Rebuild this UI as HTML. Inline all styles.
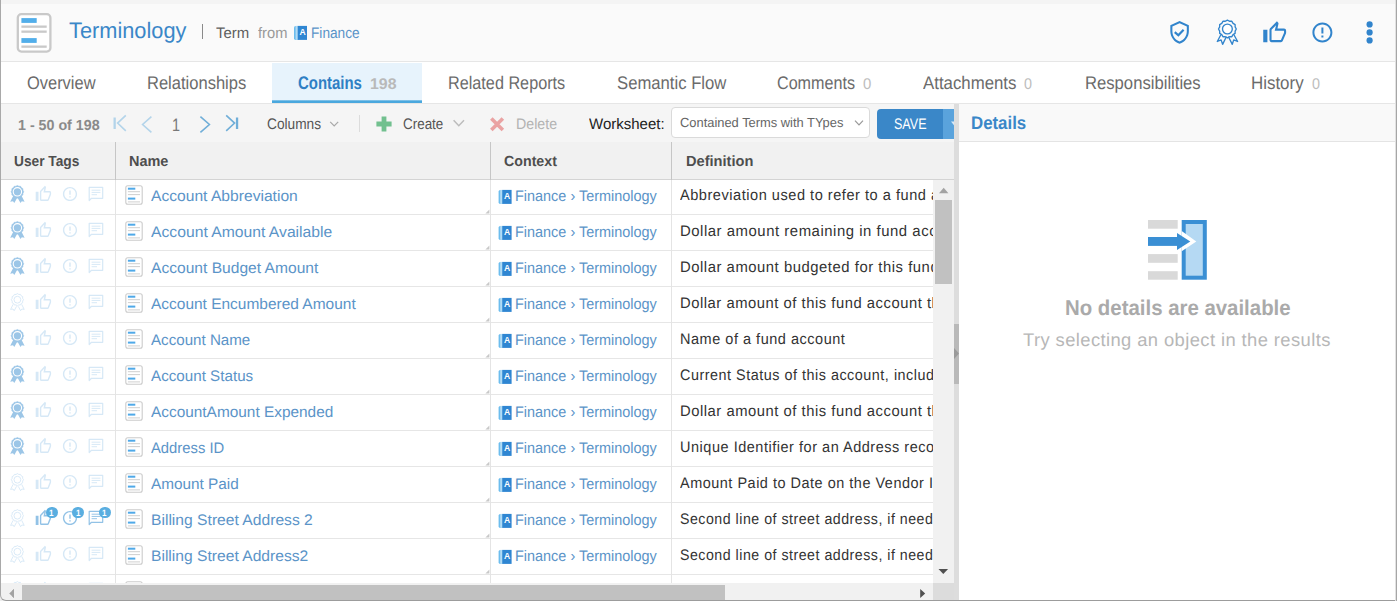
<!DOCTYPE html>
<html lang="en"><head><meta charset="utf-8"><title>Terminology</title>
<style>
html,body{margin:0;padding:0}
body{width:1397px;height:601px;overflow:hidden;position:relative;background:#fff;font-family:"Liberation Sans", sans-serif}
.b{position:absolute}
.i{position:absolute;display:block;overflow:visible}
.t{position:absolute;white-space:nowrap;line-height:1;transform-origin:0 0;display:block;text-rendering:geometricPrecision}
</style></head>
<body>
<div class="b" style="left:0;top:0;width:1397px;height:4px;background:#f4f4f4"></div>
<div class="b" style="left:0;top:4px;width:1397px;height:57px;background:#fafafa"></div>
<div class="b" style="left:0;top:61px;width:1397px;height:1px;background:#e6e6e6"></div>
<div class="b" style="left:0;top:62px;width:1397px;height:41px;background:#fff"></div>
<div class="b" style="left:272px;top:63px;width:150px;height:38px;background:#e7f3fc"></div>
<div class="b" style="left:0;top:103px;width:1397px;height:1px;background:#e6e6e6"></div>
<div class="b" style="left:272px;top:100px;width:150px;height:3px;background:linear-gradient(#9fd0ee 0,#4aa8de 40%,#4aa8de 100%)"></div>
<div class="b" style="left:0;top:104px;width:954px;height:38px;background:#f5f5f5"></div>
<div class="b" style="left:0;top:142px;width:954px;height:37px;background:#f1f1f1"></div>
<div class="b" style="left:0;top:179px;width:954px;height:1px;background:#d4d4d4"></div>
<div class="b" style="left:115px;top:142px;width:1px;height:38px;background:#c6c6c6"></div>
<div class="b" style="left:490px;top:142px;width:1px;height:38px;background:#c6c6c6"></div>
<div class="b" style="left:671px;top:142px;width:1px;height:38px;background:#c6c6c6"></div>
<svg class="i" style="left:16px;top:12px" width="37" height="42" viewBox="-0.2000 -0.6000 37.0000 42.0000" preserveAspectRatio="none"><rect x="1.6" y="1.6" width="32.6" height="37.4" rx="3.6" fill="#fff" stroke="#c9c9c9" stroke-width="2.3"/><rect x="5.2" y="5.5" width="15.3" height="4.8" fill="#52aeea"/><rect x="5.2" y="12.9" width="25.3" height="2.3" fill="#c9c9c9"/><rect x="5.2" y="17.9" width="25.3" height="2.3" fill="#c9c9c9"/><rect x="5.2" y="25.5" width="15.3" height="4.8" fill="#52aeea"/><rect x="5.2" y="32.9" width="25.3" height="2.3" fill="#c9c9c9"/></svg>
<span class="t" style="left:69.40px;top:20.00px;font-size:22.4px;color:#3a87c8;transform:scaleX(0.9725);">Terminology</span>
<div class="b" style="left:202px;top:24px;width:1px;height:15px;background:#8a8a8a"></div>
<span class="t" style="left:215.80px;top:26.00px;font-size:15.26px;color:#5e5e5e;transform:scaleX(0.9796);">Term</span>
<span class="t" style="left:258.00px;top:26.00px;font-size:15.26px;color:#999;transform:scaleX(0.9639);">from</span>
<svg class="i" style="left:294px;top:25px" width="14" height="15" viewBox="0.0000 -0.9000 14.0000 15.0000" preserveAspectRatio="none"><rect x="0" y="0" width="5" height="14" rx="1.6" fill="#6cbdee"/><rect x="1.6" y="0" width="2.4" height="14" fill="#b2dbf4"/><rect x="3.7" y="0" width="9.3" height="14" fill="#2f86d2"/><text x="8.5" y="9.1" font-family="Liberation Sans, sans-serif" font-weight="700" font-size="8.6" fill="#fff" text-anchor="middle">A</text></svg>
<span class="t" style="left:311.40px;top:26.00px;font-size:15.26px;color:#5b94c8;transform:scaleX(0.8974);">Finance</span>
<svg class="i" style="left:1167px;top:20px" width="25" height="25" viewBox="-0.2330 -0.0388 24.2718 24.2718" preserveAspectRatio="none"><path d="M12 1L3 5v6c0 5.550 3.840 10.740 9 12 5.160-1.260 9-6.450 9-12V5l-9-4zm7 10c0 4.520-2.980 8.690-7 9.930-4.020-1.240-7-5.410-7-9.930V6.300l7-3.110 7 3.110V11z" fill="#3184cc"/><path d="M7.3 11.7 L10.8 14.8 L15.9 9.4" fill="none" stroke="#3184cc" stroke-width="2.1"/></svg>
<svg class="i" style="left:1210px;top:14px" width="37" height="37" viewBox="0.0000 0.0000 37.0000 37.0000" preserveAspectRatio="none"><path d="M17.40 6.10 L19.47 7.27 L21.85 7.29 L23.06 9.34 L25.11 10.55 L25.13 12.93 L26.30 15.00 L25.13 17.07 L25.11 19.45 L23.06 20.66 L21.85 22.71 L19.47 22.73 L17.40 23.90 L15.33 22.73 L12.95 22.71 L11.74 20.66 L9.69 19.45 L9.67 17.07 L8.50 15.00 L9.67 12.93 L9.69 10.55 L11.74 9.34 L12.95 7.29 L15.33 7.27Z" fill="none" stroke="#3184cc" stroke-width="1.35" stroke-linejoin="round"/><circle cx="17.4" cy="15.0" r="4.9" fill="#fff" stroke="#3184cc" stroke-width="1.35"/><path d="M10.6 21.2 L7.3 27.5 L11.1 25.9 L12.6 30.4 L16.1 23.2 M24.2 21.2 L27.6 27.5 L23.7 25.9 L22.3 30.4 L18.7 23.2" fill="none" stroke="#3184cc" stroke-width="1.35" stroke-linejoin="round" stroke-linecap="round"/></svg>
<svg class="i" style="left:1262px;top:20px" width="26" height="26" viewBox="-0.1923 -0.2885 25.0000 25.0000" preserveAspectRatio="none"><path d="M9 21h9c.83 0 1.54-.5 1.84-1.22l3.02-7.05c.09-.23.14-.47.14-.73v-2c0-1.1-.9-2-2-2h-6.31l.95-4.57.03-.32c0-.41-.17-.79-.44-1.06L14.17 1 7.58 7.59C7.22 7.95 7 8.45 7 9v10c0 1.1.9 2 2 2zM9 9l4.34-4.34L12 10h9v2l-3 7H9V9zM1 9h4v12H1z" fill="#3184cc"/></svg>
<svg class="i" style="left:1310px;top:20px" width="25" height="25" viewBox="-0.4000 -0.4000 25.0000 25.0000" preserveAspectRatio="none"><path d="M11 15h2v2h-2zm0-8h2v6h-2zm.99-5C6.47 2 2 6.48 2 12s4.47 10 9.99 10C17.52 22 22 17.52 22 12S17.52 2 11.99 2zM12 20c-4.42 0-8-3.58-8-8s3.58-8 8-8 8 3.58 8 8-3.58 8-8 8z" fill="#3184cc"/></svg>
<svg class="i" style="left:1365px;top:20px" width="9" height="26" viewBox="-0.6000 0.0000 9.0000 26.0000" preserveAspectRatio="none"><circle cx="4" cy="4.4" r="3.1" fill="#3184cc"/><circle cx="4" cy="12.4" r="3.1" fill="#3184cc"/><circle cx="4" cy="20.4" r="3.1" fill="#3184cc"/></svg>
<span class="t" style="left:26.50px;top:74.00px;font-size:18.3px;color:#6b6b6b;transform:scaleX(0.8991);">Overview</span>
<span class="t" style="left:146.90px;top:74.00px;font-size:18.3px;color:#6b6b6b;transform:scaleX(0.9039);">Relationships</span>
<span class="t" style="left:297.70px;top:74.00px;font-size:18.3px;color:#2f7fc4;font-weight:700;transform:scaleX(0.8169);">Contains</span>
<span class="t" style="left:369.80px;top:77.00px;font-size:15.5px;color:#b9b9b9;font-weight:700;transform:scaleX(1.0242);">198</span>
<span class="t" style="left:447.80px;top:74.00px;font-size:18.3px;color:#6b6b6b;transform:scaleX(0.8871);">Related Reports</span>
<span class="t" style="left:616.60px;top:74.00px;font-size:18.3px;color:#6b6b6b;transform:scaleX(0.9125);">Semantic Flow</span>
<span class="t" style="left:776.50px;top:74.00px;font-size:18.3px;color:#6b6b6b;transform:scaleX(0.8824);">Comments</span>
<span class="t" style="left:862.70px;top:77.00px;font-size:15.5px;color:#bdbdbd;transform:scaleX(0.9623);">0</span>
<span class="t" style="left:922.60px;top:74.00px;font-size:18.3px;color:#6b6b6b;transform:scaleX(0.9192);">Attachments</span>
<span class="t" style="left:1024.40px;top:77.00px;font-size:15.5px;color:#bdbdbd;transform:scaleX(0.9275);">0</span>
<span class="t" style="left:1084.60px;top:74.00px;font-size:18.3px;color:#6b6b6b;transform:scaleX(0.9109);">Responsibilities</span>
<span class="t" style="left:1251.40px;top:74.00px;font-size:18.3px;color:#6b6b6b;transform:scaleX(0.9246);">History</span>
<span class="t" style="left:1312.00px;top:77.00px;font-size:15.5px;color:#bdbdbd;transform:scaleX(0.9275);">0</span>
<span class="t" style="left:17.60px;top:119.00px;font-size:14.6px;color:#8a8a8a;font-weight:700;transform:scaleX(0.9765);">1 - 50 of 198</span>
<svg class="i" style="left:105px;top:108px" width="141" height="31" viewBox="0.0000 0.0000 141.0000 31.0000" preserveAspectRatio="none"><path d="M9.65 9.5 V21" fill="none" stroke="#b3d4ea" stroke-width="2.3"/><path d="M20.8 7.4 L12.6 15.1 L20.8 22.9" fill="none" stroke="#b3d4ea" stroke-width="1.6"/><path d="M46.4 8.7 L37.6 16.5 L46.4 24.3" fill="none" stroke="#b3d4ea" stroke-width="1.6"/><path d="M95.4 8.7 L104.4 16.5 L95.4 24.3" fill="none" stroke="#70aed8" stroke-width="1.6"/><path d="M121.2 7.4 L129.6 15.1 L121.2 22.9" fill="none" stroke="#70aed8" stroke-width="1.6"/><path d="M132.05 9.5 V21" fill="none" stroke="#70aed8" stroke-width="2.3"/></svg>
<span class="t" style="left:172.00px;top:116.00px;font-size:18px;color:#787878;transform:scaleX(0.7988);">1</span>
<span class="t" style="left:266.60px;top:117.00px;font-size:15.26px;color:#555;transform:scaleX(0.8989);">Columns</span>
<svg class="i" style="left:329px;top:120px" width="12" height="9" viewBox="0.0000 0.0000 12.0000 9.0000" preserveAspectRatio="none"><path d="M1.2 1.8 L5.2 5.8 L9.2 1.8" fill="none" stroke="#a8a8a8" stroke-width="1.2"/></svg>
<div class="b" style="left:359px;top:115px;width:1px;height:17px;background:#dcdcdc"></div>
<svg class="i" style="left:376px;top:116px" width="17" height="17" viewBox="0.0000 0.0000 17.0000 17.0000" preserveAspectRatio="none"><path d="M5.6 0.5 H10.4 V5.6 H15.6 V10.4 H10.4 V15.5 H5.6 V10.4 H0.4 V5.6 H5.6Z" fill="#72c08f"/></svg>
<span class="t" style="left:402.70px;top:117.00px;font-size:15.26px;color:#555;transform:scaleX(0.8803);">Create</span>
<svg class="i" style="left:452px;top:118px" width="15" height="11" viewBox="0.0000 -0.5000 15.0000 11.0000" preserveAspectRatio="none"><path d="M1.6 1.8 L6.8 7.2 L12 1.8" fill="none" stroke="#bcbcbc" stroke-width="1.5"/></svg>
<svg class="i" style="left:489px;top:116px" width="17" height="17" viewBox="-0.3500 -0.4500 17.0000 17.0000" preserveAspectRatio="none"><path d="M2.0 2.0 L13.5 13.5 M13.5 2.0 L2.0 13.5" fill="none" stroke="#eaa3a3" stroke-width="3.6"/></svg>
<span class="t" style="left:516.40px;top:117.00px;font-size:15.26px;color:#b3b3b3;transform:scaleX(0.9321);">Delete</span>
<span class="t" style="left:589.20px;top:117.00px;font-size:15.26px;color:#222;transform:scaleX(0.9836);">Worksheet:</span>
<div class="b" style="left:671px;top:107px;width:199px;height:31px;box-sizing:border-box;border:1px solid #dadada;border-radius:4px;background:#fff"></div>
<span class="t" style="left:679.80px;top:116.00px;font-size:13.2px;color:#666;transform:scaleX(0.9777);">Contained Terms with TYpes</span>
<svg class="i" style="left:854px;top:119px" width="12" height="9" viewBox="0.0000 0.0000 12.0000 9.0000" preserveAspectRatio="none"><path d="M1.0 1.6 L5.0 5.8 L9.0 1.6" fill="none" stroke="#999" stroke-width="1.2"/></svg>
<div class="b" style="left:877px;top:109px;width:66px;height:30px;background:#3a87c8;border-radius:4px 0 0 4px"></div>
<div class="b" style="left:943px;top:109px;width:11px;height:30px;background:#5aa3dc"></div>
<svg class="i" style="left:950px;top:121px" width="5" height="7" viewBox="-0.5000 0.0000 5.0000 7.0000" preserveAspectRatio="none"><path d="M0.5 0.5 L4 0.5 L4 5Z" fill="#d7e9f7"/></svg>
<span class="t" style="left:893.60px;top:117.00px;font-size:15.26px;color:#fff;transform:scaleX(0.8215);">SAVE</span>
<span class="t" style="left:13.60px;top:155.00px;font-size:14.7px;color:#4e4e4e;font-weight:700;transform:scaleX(0.9351);">User Tags</span>
<span class="t" style="left:128.80px;top:155.00px;font-size:14.7px;color:#4e4e4e;font-weight:700;transform:scaleX(0.9846);">Name</span>
<span class="t" style="left:504.00px;top:155.00px;font-size:14.7px;color:#4e4e4e;font-weight:700;transform:scaleX(0.9676);">Context</span>
<span class="t" style="left:685.60px;top:155.00px;font-size:14.7px;color:#4e4e4e;font-weight:700;transform:scaleX(0.9953);">Definition</span>
<div class="b" id="grid" style="left:0;top:180px;width:933px;height:403px;overflow:hidden;background:#fff">
<div class="b" style="left:0;top:34px;width:933px;height:1px;background:#e6e6e6"></div>
<svg class="i" style="left:10px;top:4px" width="15" height="20" viewBox="-0.1000 -0.8000 15.0000 20.0000" preserveAspectRatio="none"><path d="M3.3 10.6 L0.1 16.9 L2.9 16.4 L4.2 18.2 L7.3 12.6 L10.4 18.2 L11.7 16.4 L14.5 16.9 L11.3 10.6Z" fill="#9cc6e7"/><path d="M7.30 0.65 L8.79 1.45 L10.47 1.50 L11.37 2.93 L12.80 3.83 L12.85 5.51 L13.65 7.00 L12.85 8.49 L12.80 10.17 L11.37 11.07 L10.47 12.50 L8.79 12.55 L7.30 13.35 L5.81 12.55 L4.13 12.50 L3.23 11.07 L1.80 10.18 L1.75 8.49 L0.95 7.00 L1.75 5.51 L1.80 3.82 L3.23 2.93 L4.12 1.50 L5.81 1.45Z" fill="#9cc6e7" stroke="#9cc6e7" stroke-width="0.6" stroke-linejoin="round"/><circle cx="7.3" cy="7.0" r="4.2" fill="none" stroke="#fff" stroke-width="1.1"/></svg>
<svg class="i" style="left:35px;top:5px" width="17" height="19" viewBox="0.0000 0.0000 24.2857 25.0000" preserveAspectRatio="none"><path d="M9 21h9c.83 0 1.54-.5 1.84-1.22l3.02-7.05c.09-.23.14-.47.14-.73v-2c0-1.1-.9-2-2-2h-6.31l.95-4.57.03-.32c0-.41-.17-.79-.44-1.06L14.17 1 7.58 7.59C7.22 7.95 7 8.45 7 9v10c0 1.1.9 2 2 2zM9 9l4.34-4.34L12 10h9v2l-3 7H9V9zM1 9h4v12H1z" fill="#d6e8f6"/></svg>
<svg class="i" style="left:61px;top:5px" width="18" height="18" viewBox="-0.6761 -0.6761 25.3521 25.3521" preserveAspectRatio="none"><path d="M11 15h2v2h-2zm0-8h2v6h-2zm.99-5C6.47 2 2 6.48 2 12s4.47 10 9.99 10C17.52 22 22 17.52 22 12S17.52 2 11.99 2zM12 20c-4.42 0-8-3.58-8-8s3.58-8 8-8 8 3.58 8 8-3.58 8-8 8z" fill="#d6e8f6"/></svg>
<svg class="i" style="left:87px;top:5px" width="19" height="18" viewBox="0.0000 0.0000 19.0000 18.0000" preserveAspectRatio="none"><path d="M2.2 2.3 H15.7 V13.3 H4.5 L2.2 15.5Z" fill="none" stroke="#d6e8f6" stroke-width="1.2" stroke-linejoin="round"/><path d="M4.6 5.2 H13.4 M4.6 7.45 H13.4 M4.6 9.7 H10" fill="none" stroke="#d6e8f6" stroke-width="0.95"/></svg>
<svg class="i" style="left:125px;top:5px" width="19" height="21" viewBox="0.0000 0.0000 19.0000 21.0000" preserveAspectRatio="none"><rect x="0.8" y="0.7" width="16.4" height="18.6" rx="2" fill="#fff" stroke="#cbcbcb" stroke-width="1.1"/><rect x="2.9" y="2.7" width="7.4" height="2" fill="#4fa9e8"/><rect x="2.9" y="6.2" width="12.1" height="1" fill="#cfcfcf"/><rect x="2.9" y="9.1" width="12.1" height="1" fill="#cfcfcf"/><rect x="2.9" y="12.6" width="7.4" height="2" fill="#4fa9e8"/><rect x="2.9" y="16.4" width="12.1" height="1" fill="#cfcfcf"/></svg>
<span class="t" style="left:151.20px;top:189.00px;font-size:15.26px;color:#5b94c8;transform:scaleX(1.0246);margin-top:-180px;">Account Abbreviation</span>
<svg class="i" style="left:485px;top:29px" width="5" height="5" viewBox="-0.4000 -0.4000 5.0000 5.0000" preserveAspectRatio="none"><path d="M4 0 V4 H0Z" fill="#c9c9c9"/></svg>
<svg class="i" style="left:498px;top:9px" width="14" height="15" viewBox="-0.6000 -0.9000 14.0000 15.0000" preserveAspectRatio="none"><rect x="0" y="0" width="5" height="14" rx="1.6" fill="#6cbdee"/><rect x="1.6" y="0" width="2.4" height="14" fill="#b2dbf4"/><rect x="3.7" y="0" width="9.3" height="14" fill="#2f86d2"/><text x="8.5" y="9.1" font-family="Liberation Sans, sans-serif" font-weight="700" font-size="8.6" fill="#fff" text-anchor="middle">A</text></svg>
<span class="t" style="left:515.40px;top:189.00px;font-size:15.26px;color:#5b94c8;transform:scaleX(0.9469);margin-top:-180px;">Finance › Terminology</span>
<span class="t" style="left:680.40px;top:188.00px;font-size:15.26px;color:#333;letter-spacing:0.55px;transform:scaleX(0.9549);margin-top:-180px;">Abbreviation used to refer to a fund account</span>
<div class="b" style="left:0;top:70px;width:933px;height:1px;background:#e6e6e6"></div>
<svg class="i" style="left:10px;top:40px" width="15" height="20" viewBox="-0.1000 -0.8000 15.0000 20.0000" preserveAspectRatio="none"><path d="M3.3 10.6 L0.1 16.9 L2.9 16.4 L4.2 18.2 L7.3 12.6 L10.4 18.2 L11.7 16.4 L14.5 16.9 L11.3 10.6Z" fill="#9cc6e7"/><path d="M7.30 0.65 L8.79 1.45 L10.47 1.50 L11.37 2.93 L12.80 3.83 L12.85 5.51 L13.65 7.00 L12.85 8.49 L12.80 10.17 L11.37 11.07 L10.47 12.50 L8.79 12.55 L7.30 13.35 L5.81 12.55 L4.13 12.50 L3.23 11.07 L1.80 10.18 L1.75 8.49 L0.95 7.00 L1.75 5.51 L1.80 3.82 L3.23 2.93 L4.12 1.50 L5.81 1.45Z" fill="#9cc6e7" stroke="#9cc6e7" stroke-width="0.6" stroke-linejoin="round"/><circle cx="7.3" cy="7.0" r="4.2" fill="none" stroke="#fff" stroke-width="1.1"/></svg>
<svg class="i" style="left:35px;top:41px" width="17" height="19" viewBox="0.0000 0.0000 24.2857 25.0000" preserveAspectRatio="none"><path d="M9 21h9c.83 0 1.54-.5 1.84-1.22l3.02-7.05c.09-.23.14-.47.14-.73v-2c0-1.1-.9-2-2-2h-6.31l.95-4.57.03-.32c0-.41-.17-.79-.44-1.06L14.17 1 7.58 7.59C7.22 7.95 7 8.45 7 9v10c0 1.1.9 2 2 2zM9 9l4.34-4.34L12 10h9v2l-3 7H9V9zM1 9h4v12H1z" fill="#d6e8f6"/></svg>
<svg class="i" style="left:61px;top:41px" width="18" height="18" viewBox="-0.6761 -0.6761 25.3521 25.3521" preserveAspectRatio="none"><path d="M11 15h2v2h-2zm0-8h2v6h-2zm.99-5C6.47 2 2 6.48 2 12s4.47 10 9.99 10C17.52 22 22 17.52 22 12S17.52 2 11.99 2zM12 20c-4.42 0-8-3.58-8-8s3.58-8 8-8 8 3.58 8 8-3.58 8-8 8z" fill="#d6e8f6"/></svg>
<svg class="i" style="left:87px;top:41px" width="19" height="18" viewBox="0.0000 0.0000 19.0000 18.0000" preserveAspectRatio="none"><path d="M2.2 2.3 H15.7 V13.3 H4.5 L2.2 15.5Z" fill="none" stroke="#d6e8f6" stroke-width="1.2" stroke-linejoin="round"/><path d="M4.6 5.2 H13.4 M4.6 7.45 H13.4 M4.6 9.7 H10" fill="none" stroke="#d6e8f6" stroke-width="0.95"/></svg>
<svg class="i" style="left:125px;top:41px" width="19" height="21" viewBox="0.0000 0.0000 19.0000 21.0000" preserveAspectRatio="none"><rect x="0.8" y="0.7" width="16.4" height="18.6" rx="2" fill="#fff" stroke="#cbcbcb" stroke-width="1.1"/><rect x="2.9" y="2.7" width="7.4" height="2" fill="#4fa9e8"/><rect x="2.9" y="6.2" width="12.1" height="1" fill="#cfcfcf"/><rect x="2.9" y="9.1" width="12.1" height="1" fill="#cfcfcf"/><rect x="2.9" y="12.6" width="7.4" height="2" fill="#4fa9e8"/><rect x="2.9" y="16.4" width="12.1" height="1" fill="#cfcfcf"/></svg>
<span class="t" style="left:151.20px;top:225.00px;font-size:15.26px;color:#5b94c8;transform:scaleX(1.0297);margin-top:-180px;">Account Amount Available</span>
<svg class="i" style="left:485px;top:65px" width="5" height="5" viewBox="-0.4000 -0.4000 5.0000 5.0000" preserveAspectRatio="none"><path d="M4 0 V4 H0Z" fill="#c9c9c9"/></svg>
<svg class="i" style="left:498px;top:45px" width="14" height="15" viewBox="-0.6000 -0.9000 14.0000 15.0000" preserveAspectRatio="none"><rect x="0" y="0" width="5" height="14" rx="1.6" fill="#6cbdee"/><rect x="1.6" y="0" width="2.4" height="14" fill="#b2dbf4"/><rect x="3.7" y="0" width="9.3" height="14" fill="#2f86d2"/><text x="8.5" y="9.1" font-family="Liberation Sans, sans-serif" font-weight="700" font-size="8.6" fill="#fff" text-anchor="middle">A</text></svg>
<span class="t" style="left:515.40px;top:225.00px;font-size:15.26px;color:#5b94c8;transform:scaleX(0.9469);margin-top:-180px;">Finance › Terminology</span>
<span class="t" style="left:680.40px;top:224.00px;font-size:15.26px;color:#333;letter-spacing:0.55px;transform:scaleX(0.9763);margin-top:-180px;">Dollar amount remaining in fund account</span>
<div class="b" style="left:0;top:106px;width:933px;height:1px;background:#e6e6e6"></div>
<svg class="i" style="left:10px;top:76px" width="15" height="20" viewBox="-0.1000 -0.8000 15.0000 20.0000" preserveAspectRatio="none"><path d="M3.3 10.6 L0.1 16.9 L2.9 16.4 L4.2 18.2 L7.3 12.6 L10.4 18.2 L11.7 16.4 L14.5 16.9 L11.3 10.6Z" fill="#9cc6e7"/><path d="M7.30 0.65 L8.79 1.45 L10.47 1.50 L11.37 2.93 L12.80 3.83 L12.85 5.51 L13.65 7.00 L12.85 8.49 L12.80 10.17 L11.37 11.07 L10.47 12.50 L8.79 12.55 L7.30 13.35 L5.81 12.55 L4.13 12.50 L3.23 11.07 L1.80 10.18 L1.75 8.49 L0.95 7.00 L1.75 5.51 L1.80 3.82 L3.23 2.93 L4.12 1.50 L5.81 1.45Z" fill="#9cc6e7" stroke="#9cc6e7" stroke-width="0.6" stroke-linejoin="round"/><circle cx="7.3" cy="7.0" r="4.2" fill="none" stroke="#fff" stroke-width="1.1"/></svg>
<svg class="i" style="left:35px;top:77px" width="17" height="19" viewBox="0.0000 0.0000 24.2857 25.0000" preserveAspectRatio="none"><path d="M9 21h9c.83 0 1.54-.5 1.84-1.22l3.02-7.05c.09-.23.14-.47.14-.73v-2c0-1.1-.9-2-2-2h-6.31l.95-4.57.03-.32c0-.41-.17-.79-.44-1.06L14.17 1 7.58 7.59C7.22 7.95 7 8.45 7 9v10c0 1.1.9 2 2 2zM9 9l4.34-4.34L12 10h9v2l-3 7H9V9zM1 9h4v12H1z" fill="#d6e8f6"/></svg>
<svg class="i" style="left:61px;top:77px" width="18" height="18" viewBox="-0.6761 -0.6761 25.3521 25.3521" preserveAspectRatio="none"><path d="M11 15h2v2h-2zm0-8h2v6h-2zm.99-5C6.47 2 2 6.48 2 12s4.47 10 9.99 10C17.52 22 22 17.52 22 12S17.52 2 11.99 2zM12 20c-4.42 0-8-3.58-8-8s3.58-8 8-8 8 3.58 8 8-3.58 8-8 8z" fill="#d6e8f6"/></svg>
<svg class="i" style="left:87px;top:77px" width="19" height="18" viewBox="0.0000 0.0000 19.0000 18.0000" preserveAspectRatio="none"><path d="M2.2 2.3 H15.7 V13.3 H4.5 L2.2 15.5Z" fill="none" stroke="#d6e8f6" stroke-width="1.2" stroke-linejoin="round"/><path d="M4.6 5.2 H13.4 M4.6 7.45 H13.4 M4.6 9.7 H10" fill="none" stroke="#d6e8f6" stroke-width="0.95"/></svg>
<svg class="i" style="left:125px;top:77px" width="19" height="21" viewBox="0.0000 0.0000 19.0000 21.0000" preserveAspectRatio="none"><rect x="0.8" y="0.7" width="16.4" height="18.6" rx="2" fill="#fff" stroke="#cbcbcb" stroke-width="1.1"/><rect x="2.9" y="2.7" width="7.4" height="2" fill="#4fa9e8"/><rect x="2.9" y="6.2" width="12.1" height="1" fill="#cfcfcf"/><rect x="2.9" y="9.1" width="12.1" height="1" fill="#cfcfcf"/><rect x="2.9" y="12.6" width="7.4" height="2" fill="#4fa9e8"/><rect x="2.9" y="16.4" width="12.1" height="1" fill="#cfcfcf"/></svg>
<span class="t" style="left:151.20px;top:261.00px;font-size:15.26px;color:#5b94c8;transform:scaleX(1.0225);margin-top:-180px;">Account Budget Amount</span>
<svg class="i" style="left:485px;top:101px" width="5" height="5" viewBox="-0.4000 -0.4000 5.0000 5.0000" preserveAspectRatio="none"><path d="M4 0 V4 H0Z" fill="#c9c9c9"/></svg>
<svg class="i" style="left:498px;top:81px" width="14" height="15" viewBox="-0.6000 -0.9000 14.0000 15.0000" preserveAspectRatio="none"><rect x="0" y="0" width="5" height="14" rx="1.6" fill="#6cbdee"/><rect x="1.6" y="0" width="2.4" height="14" fill="#b2dbf4"/><rect x="3.7" y="0" width="9.3" height="14" fill="#2f86d2"/><text x="8.5" y="9.1" font-family="Liberation Sans, sans-serif" font-weight="700" font-size="8.6" fill="#fff" text-anchor="middle">A</text></svg>
<span class="t" style="left:515.40px;top:261.00px;font-size:15.26px;color:#5b94c8;transform:scaleX(0.9469);margin-top:-180px;">Finance › Terminology</span>
<span class="t" style="left:680.40px;top:260.00px;font-size:15.26px;color:#333;letter-spacing:0.55px;transform:scaleX(0.9725);margin-top:-180px;">Dollar amount budgeted for this fund account</span>
<div class="b" style="left:0;top:142px;width:933px;height:1px;background:#e6e6e6"></div>
<svg class="i" style="left:10px;top:112px" width="15" height="20" viewBox="-0.1000 -0.8000 15.0000 20.0000" preserveAspectRatio="none"><path d="M3.0 11.6 L0.5 16.6 L2.9 16.2 L4.1 17.9 L6.4 13.6 M8.2 13.6 L10.5 17.9 L11.7 16.2 L14.1 16.6 L11.6 11.6" fill="none" stroke="#d6e8f6" stroke-width="0.9" stroke-linejoin="round"/><path d="M7.30 0.80 L8.70 1.68 L10.35 1.62 L11.12 3.08 L12.58 3.85 L12.52 5.50 L13.40 6.90 L12.52 8.30 L12.58 9.95 L11.12 10.72 L10.35 12.18 L8.70 12.12 L7.30 13.00 L5.90 12.12 L4.25 12.18 L3.48 10.72 L2.02 9.95 L2.08 8.30 L1.20 6.90 L2.08 5.50 L2.02 3.85 L3.48 3.08 L4.25 1.62 L5.90 1.68Z" fill="none" stroke="#d6e8f6" stroke-width="0.9" stroke-linejoin="round"/><circle cx="7.3" cy="6.9" r="3.4" fill="none" stroke="#d6e8f6" stroke-width="0.9"/></svg>
<svg class="i" style="left:35px;top:113px" width="17" height="19" viewBox="0.0000 0.0000 24.2857 25.0000" preserveAspectRatio="none"><path d="M9 21h9c.83 0 1.54-.5 1.84-1.22l3.02-7.05c.09-.23.14-.47.14-.73v-2c0-1.1-.9-2-2-2h-6.31l.95-4.57.03-.32c0-.41-.17-.79-.44-1.06L14.17 1 7.58 7.59C7.22 7.95 7 8.45 7 9v10c0 1.1.9 2 2 2zM9 9l4.34-4.34L12 10h9v2l-3 7H9V9zM1 9h4v12H1z" fill="#d6e8f6"/></svg>
<svg class="i" style="left:61px;top:113px" width="18" height="18" viewBox="-0.6761 -0.6761 25.3521 25.3521" preserveAspectRatio="none"><path d="M11 15h2v2h-2zm0-8h2v6h-2zm.99-5C6.47 2 2 6.48 2 12s4.47 10 9.99 10C17.52 22 22 17.52 22 12S17.52 2 11.99 2zM12 20c-4.42 0-8-3.58-8-8s3.58-8 8-8 8 3.58 8 8-3.58 8-8 8z" fill="#d6e8f6"/></svg>
<svg class="i" style="left:87px;top:113px" width="19" height="18" viewBox="0.0000 0.0000 19.0000 18.0000" preserveAspectRatio="none"><path d="M2.2 2.3 H15.7 V13.3 H4.5 L2.2 15.5Z" fill="none" stroke="#d6e8f6" stroke-width="1.2" stroke-linejoin="round"/><path d="M4.6 5.2 H13.4 M4.6 7.45 H13.4 M4.6 9.7 H10" fill="none" stroke="#d6e8f6" stroke-width="0.95"/></svg>
<svg class="i" style="left:125px;top:113px" width="19" height="21" viewBox="0.0000 0.0000 19.0000 21.0000" preserveAspectRatio="none"><rect x="0.8" y="0.7" width="16.4" height="18.6" rx="2" fill="#fff" stroke="#cbcbcb" stroke-width="1.1"/><rect x="2.9" y="2.7" width="7.4" height="2" fill="#4fa9e8"/><rect x="2.9" y="6.2" width="12.1" height="1" fill="#cfcfcf"/><rect x="2.9" y="9.1" width="12.1" height="1" fill="#cfcfcf"/><rect x="2.9" y="12.6" width="7.4" height="2" fill="#4fa9e8"/><rect x="2.9" y="16.4" width="12.1" height="1" fill="#cfcfcf"/></svg>
<span class="t" style="left:151.20px;top:297.00px;font-size:15.26px;color:#5b94c8;transform:scaleX(1.0145);margin-top:-180px;">Account Encumbered Amount</span>
<svg class="i" style="left:485px;top:137px" width="5" height="5" viewBox="-0.4000 -0.4000 5.0000 5.0000" preserveAspectRatio="none"><path d="M4 0 V4 H0Z" fill="#c9c9c9"/></svg>
<svg class="i" style="left:498px;top:117px" width="14" height="15" viewBox="-0.6000 -0.9000 14.0000 15.0000" preserveAspectRatio="none"><rect x="0" y="0" width="5" height="14" rx="1.6" fill="#6cbdee"/><rect x="1.6" y="0" width="2.4" height="14" fill="#b2dbf4"/><rect x="3.7" y="0" width="9.3" height="14" fill="#2f86d2"/><text x="8.5" y="9.1" font-family="Liberation Sans, sans-serif" font-weight="700" font-size="8.6" fill="#fff" text-anchor="middle">A</text></svg>
<span class="t" style="left:515.40px;top:297.00px;font-size:15.26px;color:#5b94c8;transform:scaleX(0.9469);margin-top:-180px;">Finance › Terminology</span>
<span class="t" style="left:680.40px;top:296.00px;font-size:15.26px;color:#333;letter-spacing:0.55px;transform:scaleX(0.9687);margin-top:-180px;">Dollar amount of this fund account that is encumbered</span>
<div class="b" style="left:0;top:178px;width:933px;height:1px;background:#e6e6e6"></div>
<svg class="i" style="left:10px;top:148px" width="15" height="20" viewBox="-0.1000 -0.8000 15.0000 20.0000" preserveAspectRatio="none"><path d="M3.3 10.6 L0.1 16.9 L2.9 16.4 L4.2 18.2 L7.3 12.6 L10.4 18.2 L11.7 16.4 L14.5 16.9 L11.3 10.6Z" fill="#9cc6e7"/><path d="M7.30 0.65 L8.79 1.45 L10.47 1.50 L11.37 2.93 L12.80 3.83 L12.85 5.51 L13.65 7.00 L12.85 8.49 L12.80 10.17 L11.37 11.07 L10.47 12.50 L8.79 12.55 L7.30 13.35 L5.81 12.55 L4.13 12.50 L3.23 11.07 L1.80 10.18 L1.75 8.49 L0.95 7.00 L1.75 5.51 L1.80 3.82 L3.23 2.93 L4.12 1.50 L5.81 1.45Z" fill="#9cc6e7" stroke="#9cc6e7" stroke-width="0.6" stroke-linejoin="round"/><circle cx="7.3" cy="7.0" r="4.2" fill="none" stroke="#fff" stroke-width="1.1"/></svg>
<svg class="i" style="left:35px;top:149px" width="17" height="19" viewBox="0.0000 0.0000 24.2857 25.0000" preserveAspectRatio="none"><path d="M9 21h9c.83 0 1.54-.5 1.84-1.22l3.02-7.05c.09-.23.14-.47.14-.73v-2c0-1.1-.9-2-2-2h-6.31l.95-4.57.03-.32c0-.41-.17-.79-.44-1.06L14.17 1 7.58 7.59C7.22 7.95 7 8.45 7 9v10c0 1.1.9 2 2 2zM9 9l4.34-4.34L12 10h9v2l-3 7H9V9zM1 9h4v12H1z" fill="#d6e8f6"/></svg>
<svg class="i" style="left:61px;top:149px" width="18" height="18" viewBox="-0.6761 -0.6761 25.3521 25.3521" preserveAspectRatio="none"><path d="M11 15h2v2h-2zm0-8h2v6h-2zm.99-5C6.47 2 2 6.48 2 12s4.47 10 9.99 10C17.52 22 22 17.52 22 12S17.52 2 11.99 2zM12 20c-4.42 0-8-3.58-8-8s3.58-8 8-8 8 3.58 8 8-3.58 8-8 8z" fill="#d6e8f6"/></svg>
<svg class="i" style="left:87px;top:149px" width="19" height="18" viewBox="0.0000 0.0000 19.0000 18.0000" preserveAspectRatio="none"><path d="M2.2 2.3 H15.7 V13.3 H4.5 L2.2 15.5Z" fill="none" stroke="#d6e8f6" stroke-width="1.2" stroke-linejoin="round"/><path d="M4.6 5.2 H13.4 M4.6 7.45 H13.4 M4.6 9.7 H10" fill="none" stroke="#d6e8f6" stroke-width="0.95"/></svg>
<svg class="i" style="left:125px;top:149px" width="19" height="21" viewBox="0.0000 0.0000 19.0000 21.0000" preserveAspectRatio="none"><rect x="0.8" y="0.7" width="16.4" height="18.6" rx="2" fill="#fff" stroke="#cbcbcb" stroke-width="1.1"/><rect x="2.9" y="2.7" width="7.4" height="2" fill="#4fa9e8"/><rect x="2.9" y="6.2" width="12.1" height="1" fill="#cfcfcf"/><rect x="2.9" y="9.1" width="12.1" height="1" fill="#cfcfcf"/><rect x="2.9" y="12.6" width="7.4" height="2" fill="#4fa9e8"/><rect x="2.9" y="16.4" width="12.1" height="1" fill="#cfcfcf"/></svg>
<span class="t" style="left:151.20px;top:333.00px;font-size:15.26px;color:#5b94c8;transform:scaleX(0.9927);margin-top:-180px;">Account Name</span>
<svg class="i" style="left:485px;top:173px" width="5" height="5" viewBox="-0.4000 -0.4000 5.0000 5.0000" preserveAspectRatio="none"><path d="M4 0 V4 H0Z" fill="#c9c9c9"/></svg>
<svg class="i" style="left:498px;top:153px" width="14" height="15" viewBox="-0.6000 -0.9000 14.0000 15.0000" preserveAspectRatio="none"><rect x="0" y="0" width="5" height="14" rx="1.6" fill="#6cbdee"/><rect x="1.6" y="0" width="2.4" height="14" fill="#b2dbf4"/><rect x="3.7" y="0" width="9.3" height="14" fill="#2f86d2"/><text x="8.5" y="9.1" font-family="Liberation Sans, sans-serif" font-weight="700" font-size="8.6" fill="#fff" text-anchor="middle">A</text></svg>
<span class="t" style="left:515.40px;top:333.00px;font-size:15.26px;color:#5b94c8;transform:scaleX(0.9469);margin-top:-180px;">Finance › Terminology</span>
<span class="t" style="left:680.40px;top:332.00px;font-size:15.26px;color:#333;letter-spacing:0.55px;transform:scaleX(0.9504);margin-top:-180px;">Name of a fund account</span>
<div class="b" style="left:0;top:214px;width:933px;height:1px;background:#e6e6e6"></div>
<svg class="i" style="left:10px;top:184px" width="15" height="20" viewBox="-0.1000 -0.8000 15.0000 20.0000" preserveAspectRatio="none"><path d="M3.3 10.6 L0.1 16.9 L2.9 16.4 L4.2 18.2 L7.3 12.6 L10.4 18.2 L11.7 16.4 L14.5 16.9 L11.3 10.6Z" fill="#9cc6e7"/><path d="M7.30 0.65 L8.79 1.45 L10.47 1.50 L11.37 2.93 L12.80 3.83 L12.85 5.51 L13.65 7.00 L12.85 8.49 L12.80 10.17 L11.37 11.07 L10.47 12.50 L8.79 12.55 L7.30 13.35 L5.81 12.55 L4.13 12.50 L3.23 11.07 L1.80 10.18 L1.75 8.49 L0.95 7.00 L1.75 5.51 L1.80 3.82 L3.23 2.93 L4.12 1.50 L5.81 1.45Z" fill="#9cc6e7" stroke="#9cc6e7" stroke-width="0.6" stroke-linejoin="round"/><circle cx="7.3" cy="7.0" r="4.2" fill="none" stroke="#fff" stroke-width="1.1"/></svg>
<svg class="i" style="left:35px;top:185px" width="17" height="19" viewBox="0.0000 0.0000 24.2857 25.0000" preserveAspectRatio="none"><path d="M9 21h9c.83 0 1.54-.5 1.84-1.22l3.02-7.05c.09-.23.14-.47.14-.73v-2c0-1.1-.9-2-2-2h-6.31l.95-4.57.03-.32c0-.41-.17-.79-.44-1.06L14.17 1 7.58 7.59C7.22 7.95 7 8.45 7 9v10c0 1.1.9 2 2 2zM9 9l4.34-4.34L12 10h9v2l-3 7H9V9zM1 9h4v12H1z" fill="#d6e8f6"/></svg>
<svg class="i" style="left:61px;top:185px" width="18" height="18" viewBox="-0.6761 -0.6761 25.3521 25.3521" preserveAspectRatio="none"><path d="M11 15h2v2h-2zm0-8h2v6h-2zm.99-5C6.47 2 2 6.48 2 12s4.47 10 9.99 10C17.52 22 22 17.52 22 12S17.52 2 11.99 2zM12 20c-4.42 0-8-3.58-8-8s3.58-8 8-8 8 3.58 8 8-3.58 8-8 8z" fill="#d6e8f6"/></svg>
<svg class="i" style="left:87px;top:185px" width="19" height="18" viewBox="0.0000 0.0000 19.0000 18.0000" preserveAspectRatio="none"><path d="M2.2 2.3 H15.7 V13.3 H4.5 L2.2 15.5Z" fill="none" stroke="#d6e8f6" stroke-width="1.2" stroke-linejoin="round"/><path d="M4.6 5.2 H13.4 M4.6 7.45 H13.4 M4.6 9.7 H10" fill="none" stroke="#d6e8f6" stroke-width="0.95"/></svg>
<svg class="i" style="left:125px;top:185px" width="19" height="21" viewBox="0.0000 0.0000 19.0000 21.0000" preserveAspectRatio="none"><rect x="0.8" y="0.7" width="16.4" height="18.6" rx="2" fill="#fff" stroke="#cbcbcb" stroke-width="1.1"/><rect x="2.9" y="2.7" width="7.4" height="2" fill="#4fa9e8"/><rect x="2.9" y="6.2" width="12.1" height="1" fill="#cfcfcf"/><rect x="2.9" y="9.1" width="12.1" height="1" fill="#cfcfcf"/><rect x="2.9" y="12.6" width="7.4" height="2" fill="#4fa9e8"/><rect x="2.9" y="16.4" width="12.1" height="1" fill="#cfcfcf"/></svg>
<span class="t" style="left:151.20px;top:369.00px;font-size:15.26px;color:#5b94c8;transform:scaleX(0.9963);margin-top:-180px;">Account Status</span>
<svg class="i" style="left:485px;top:209px" width="5" height="5" viewBox="-0.4000 -0.4000 5.0000 5.0000" preserveAspectRatio="none"><path d="M4 0 V4 H0Z" fill="#c9c9c9"/></svg>
<svg class="i" style="left:498px;top:189px" width="14" height="15" viewBox="-0.6000 -0.9000 14.0000 15.0000" preserveAspectRatio="none"><rect x="0" y="0" width="5" height="14" rx="1.6" fill="#6cbdee"/><rect x="1.6" y="0" width="2.4" height="14" fill="#b2dbf4"/><rect x="3.7" y="0" width="9.3" height="14" fill="#2f86d2"/><text x="8.5" y="9.1" font-family="Liberation Sans, sans-serif" font-weight="700" font-size="8.6" fill="#fff" text-anchor="middle">A</text></svg>
<span class="t" style="left:515.40px;top:369.00px;font-size:15.26px;color:#5b94c8;transform:scaleX(0.9469);margin-top:-180px;">Finance › Terminology</span>
<span class="t" style="left:680.40px;top:368.00px;font-size:15.26px;color:#333;letter-spacing:0.55px;transform:scaleX(0.9424);margin-top:-180px;">Current Status of this account, including</span>
<div class="b" style="left:0;top:250px;width:933px;height:1px;background:#e6e6e6"></div>
<svg class="i" style="left:10px;top:220px" width="15" height="20" viewBox="-0.1000 -0.8000 15.0000 20.0000" preserveAspectRatio="none"><path d="M3.3 10.6 L0.1 16.9 L2.9 16.4 L4.2 18.2 L7.3 12.6 L10.4 18.2 L11.7 16.4 L14.5 16.9 L11.3 10.6Z" fill="#9cc6e7"/><path d="M7.30 0.65 L8.79 1.45 L10.47 1.50 L11.37 2.93 L12.80 3.83 L12.85 5.51 L13.65 7.00 L12.85 8.49 L12.80 10.17 L11.37 11.07 L10.47 12.50 L8.79 12.55 L7.30 13.35 L5.81 12.55 L4.13 12.50 L3.23 11.07 L1.80 10.18 L1.75 8.49 L0.95 7.00 L1.75 5.51 L1.80 3.82 L3.23 2.93 L4.12 1.50 L5.81 1.45Z" fill="#9cc6e7" stroke="#9cc6e7" stroke-width="0.6" stroke-linejoin="round"/><circle cx="7.3" cy="7.0" r="4.2" fill="none" stroke="#fff" stroke-width="1.1"/></svg>
<svg class="i" style="left:35px;top:221px" width="17" height="19" viewBox="0.0000 0.0000 24.2857 25.0000" preserveAspectRatio="none"><path d="M9 21h9c.83 0 1.54-.5 1.84-1.22l3.02-7.05c.09-.23.14-.47.14-.73v-2c0-1.1-.9-2-2-2h-6.31l.95-4.57.03-.32c0-.41-.17-.79-.44-1.06L14.17 1 7.58 7.59C7.22 7.95 7 8.45 7 9v10c0 1.1.9 2 2 2zM9 9l4.34-4.34L12 10h9v2l-3 7H9V9zM1 9h4v12H1z" fill="#d6e8f6"/></svg>
<svg class="i" style="left:61px;top:221px" width="18" height="18" viewBox="-0.6761 -0.6761 25.3521 25.3521" preserveAspectRatio="none"><path d="M11 15h2v2h-2zm0-8h2v6h-2zm.99-5C6.47 2 2 6.48 2 12s4.47 10 9.99 10C17.52 22 22 17.52 22 12S17.52 2 11.99 2zM12 20c-4.42 0-8-3.58-8-8s3.58-8 8-8 8 3.58 8 8-3.58 8-8 8z" fill="#d6e8f6"/></svg>
<svg class="i" style="left:87px;top:221px" width="19" height="18" viewBox="0.0000 0.0000 19.0000 18.0000" preserveAspectRatio="none"><path d="M2.2 2.3 H15.7 V13.3 H4.5 L2.2 15.5Z" fill="none" stroke="#d6e8f6" stroke-width="1.2" stroke-linejoin="round"/><path d="M4.6 5.2 H13.4 M4.6 7.45 H13.4 M4.6 9.7 H10" fill="none" stroke="#d6e8f6" stroke-width="0.95"/></svg>
<svg class="i" style="left:125px;top:221px" width="19" height="21" viewBox="0.0000 0.0000 19.0000 21.0000" preserveAspectRatio="none"><rect x="0.8" y="0.7" width="16.4" height="18.6" rx="2" fill="#fff" stroke="#cbcbcb" stroke-width="1.1"/><rect x="2.9" y="2.7" width="7.4" height="2" fill="#4fa9e8"/><rect x="2.9" y="6.2" width="12.1" height="1" fill="#cfcfcf"/><rect x="2.9" y="9.1" width="12.1" height="1" fill="#cfcfcf"/><rect x="2.9" y="12.6" width="7.4" height="2" fill="#4fa9e8"/><rect x="2.9" y="16.4" width="12.1" height="1" fill="#cfcfcf"/></svg>
<span class="t" style="left:151.20px;top:405.00px;font-size:15.26px;color:#5b94c8;transform:scaleX(1.0094);margin-top:-180px;">AccountAmount Expended</span>
<svg class="i" style="left:485px;top:245px" width="5" height="5" viewBox="-0.4000 -0.4000 5.0000 5.0000" preserveAspectRatio="none"><path d="M4 0 V4 H0Z" fill="#c9c9c9"/></svg>
<svg class="i" style="left:498px;top:225px" width="14" height="15" viewBox="-0.6000 -0.9000 14.0000 15.0000" preserveAspectRatio="none"><rect x="0" y="0" width="5" height="14" rx="1.6" fill="#6cbdee"/><rect x="1.6" y="0" width="2.4" height="14" fill="#b2dbf4"/><rect x="3.7" y="0" width="9.3" height="14" fill="#2f86d2"/><text x="8.5" y="9.1" font-family="Liberation Sans, sans-serif" font-weight="700" font-size="8.6" fill="#fff" text-anchor="middle">A</text></svg>
<span class="t" style="left:515.40px;top:405.00px;font-size:15.26px;color:#5b94c8;transform:scaleX(0.9469);margin-top:-180px;">Finance › Terminology</span>
<span class="t" style="left:680.40px;top:404.00px;font-size:15.26px;color:#333;letter-spacing:0.55px;transform:scaleX(0.9687);margin-top:-180px;">Dollar amount of this fund account that is expended</span>
<div class="b" style="left:0;top:286px;width:933px;height:1px;background:#e6e6e6"></div>
<svg class="i" style="left:10px;top:256px" width="15" height="20" viewBox="-0.1000 -0.8000 15.0000 20.0000" preserveAspectRatio="none"><path d="M3.3 10.6 L0.1 16.9 L2.9 16.4 L4.2 18.2 L7.3 12.6 L10.4 18.2 L11.7 16.4 L14.5 16.9 L11.3 10.6Z" fill="#9cc6e7"/><path d="M7.30 0.65 L8.79 1.45 L10.47 1.50 L11.37 2.93 L12.80 3.83 L12.85 5.51 L13.65 7.00 L12.85 8.49 L12.80 10.17 L11.37 11.07 L10.47 12.50 L8.79 12.55 L7.30 13.35 L5.81 12.55 L4.13 12.50 L3.23 11.07 L1.80 10.18 L1.75 8.49 L0.95 7.00 L1.75 5.51 L1.80 3.82 L3.23 2.93 L4.12 1.50 L5.81 1.45Z" fill="#9cc6e7" stroke="#9cc6e7" stroke-width="0.6" stroke-linejoin="round"/><circle cx="7.3" cy="7.0" r="4.2" fill="none" stroke="#fff" stroke-width="1.1"/></svg>
<svg class="i" style="left:35px;top:257px" width="17" height="19" viewBox="0.0000 0.0000 24.2857 25.0000" preserveAspectRatio="none"><path d="M9 21h9c.83 0 1.54-.5 1.84-1.22l3.02-7.05c.09-.23.14-.47.14-.73v-2c0-1.1-.9-2-2-2h-6.31l.95-4.57.03-.32c0-.41-.17-.79-.44-1.06L14.17 1 7.58 7.59C7.22 7.95 7 8.45 7 9v10c0 1.1.9 2 2 2zM9 9l4.34-4.34L12 10h9v2l-3 7H9V9zM1 9h4v12H1z" fill="#d6e8f6"/></svg>
<svg class="i" style="left:61px;top:257px" width="18" height="18" viewBox="-0.6761 -0.6761 25.3521 25.3521" preserveAspectRatio="none"><path d="M11 15h2v2h-2zm0-8h2v6h-2zm.99-5C6.47 2 2 6.48 2 12s4.47 10 9.99 10C17.52 22 22 17.52 22 12S17.52 2 11.99 2zM12 20c-4.42 0-8-3.58-8-8s3.58-8 8-8 8 3.58 8 8-3.58 8-8 8z" fill="#d6e8f6"/></svg>
<svg class="i" style="left:87px;top:257px" width="19" height="18" viewBox="0.0000 0.0000 19.0000 18.0000" preserveAspectRatio="none"><path d="M2.2 2.3 H15.7 V13.3 H4.5 L2.2 15.5Z" fill="none" stroke="#d6e8f6" stroke-width="1.2" stroke-linejoin="round"/><path d="M4.6 5.2 H13.4 M4.6 7.45 H13.4 M4.6 9.7 H10" fill="none" stroke="#d6e8f6" stroke-width="0.95"/></svg>
<svg class="i" style="left:125px;top:257px" width="19" height="21" viewBox="0.0000 0.0000 19.0000 21.0000" preserveAspectRatio="none"><rect x="0.8" y="0.7" width="16.4" height="18.6" rx="2" fill="#fff" stroke="#cbcbcb" stroke-width="1.1"/><rect x="2.9" y="2.7" width="7.4" height="2" fill="#4fa9e8"/><rect x="2.9" y="6.2" width="12.1" height="1" fill="#cfcfcf"/><rect x="2.9" y="9.1" width="12.1" height="1" fill="#cfcfcf"/><rect x="2.9" y="12.6" width="7.4" height="2" fill="#4fa9e8"/><rect x="2.9" y="16.4" width="12.1" height="1" fill="#cfcfcf"/></svg>
<span class="t" style="left:151.20px;top:441.00px;font-size:15.26px;color:#5b94c8;transform:scaleX(0.9703);margin-top:-180px;">Address ID</span>
<svg class="i" style="left:485px;top:281px" width="5" height="5" viewBox="-0.4000 -0.4000 5.0000 5.0000" preserveAspectRatio="none"><path d="M4 0 V4 H0Z" fill="#c9c9c9"/></svg>
<svg class="i" style="left:498px;top:261px" width="14" height="15" viewBox="-0.6000 -0.9000 14.0000 15.0000" preserveAspectRatio="none"><rect x="0" y="0" width="5" height="14" rx="1.6" fill="#6cbdee"/><rect x="1.6" y="0" width="2.4" height="14" fill="#b2dbf4"/><rect x="3.7" y="0" width="9.3" height="14" fill="#2f86d2"/><text x="8.5" y="9.1" font-family="Liberation Sans, sans-serif" font-weight="700" font-size="8.6" fill="#fff" text-anchor="middle">A</text></svg>
<span class="t" style="left:515.40px;top:441.00px;font-size:15.26px;color:#5b94c8;transform:scaleX(0.9469);margin-top:-180px;">Finance › Terminology</span>
<span class="t" style="left:680.40px;top:440.00px;font-size:15.26px;color:#333;letter-spacing:0.55px;transform:scaleX(0.9506);margin-top:-180px;">Unique Identifier for an Address record</span>
<div class="b" style="left:0;top:322px;width:933px;height:1px;background:#e6e6e6"></div>
<svg class="i" style="left:10px;top:292px" width="15" height="20" viewBox="-0.1000 -0.8000 15.0000 20.0000" preserveAspectRatio="none"><path d="M3.0 11.6 L0.5 16.6 L2.9 16.2 L4.1 17.9 L6.4 13.6 M8.2 13.6 L10.5 17.9 L11.7 16.2 L14.1 16.6 L11.6 11.6" fill="none" stroke="#d6e8f6" stroke-width="0.9" stroke-linejoin="round"/><path d="M7.30 0.80 L8.70 1.68 L10.35 1.62 L11.12 3.08 L12.58 3.85 L12.52 5.50 L13.40 6.90 L12.52 8.30 L12.58 9.95 L11.12 10.72 L10.35 12.18 L8.70 12.12 L7.30 13.00 L5.90 12.12 L4.25 12.18 L3.48 10.72 L2.02 9.95 L2.08 8.30 L1.20 6.90 L2.08 5.50 L2.02 3.85 L3.48 3.08 L4.25 1.62 L5.90 1.68Z" fill="none" stroke="#d6e8f6" stroke-width="0.9" stroke-linejoin="round"/><circle cx="7.3" cy="6.9" r="3.4" fill="none" stroke="#d6e8f6" stroke-width="0.9"/></svg>
<svg class="i" style="left:35px;top:293px" width="17" height="19" viewBox="0.0000 0.0000 24.2857 25.0000" preserveAspectRatio="none"><path d="M9 21h9c.83 0 1.54-.5 1.84-1.22l3.02-7.05c.09-.23.14-.47.14-.73v-2c0-1.1-.9-2-2-2h-6.31l.95-4.57.03-.32c0-.41-.17-.79-.44-1.06L14.17 1 7.58 7.59C7.22 7.95 7 8.45 7 9v10c0 1.1.9 2 2 2zM9 9l4.34-4.34L12 10h9v2l-3 7H9V9zM1 9h4v12H1z" fill="#d6e8f6"/></svg>
<svg class="i" style="left:61px;top:293px" width="18" height="18" viewBox="-0.6761 -0.6761 25.3521 25.3521" preserveAspectRatio="none"><path d="M11 15h2v2h-2zm0-8h2v6h-2zm.99-5C6.47 2 2 6.48 2 12s4.47 10 9.99 10C17.52 22 22 17.52 22 12S17.52 2 11.99 2zM12 20c-4.42 0-8-3.58-8-8s3.58-8 8-8 8 3.58 8 8-3.58 8-8 8z" fill="#d6e8f6"/></svg>
<svg class="i" style="left:87px;top:293px" width="19" height="18" viewBox="0.0000 0.0000 19.0000 18.0000" preserveAspectRatio="none"><path d="M2.2 2.3 H15.7 V13.3 H4.5 L2.2 15.5Z" fill="none" stroke="#d6e8f6" stroke-width="1.2" stroke-linejoin="round"/><path d="M4.6 5.2 H13.4 M4.6 7.45 H13.4 M4.6 9.7 H10" fill="none" stroke="#d6e8f6" stroke-width="0.95"/></svg>
<svg class="i" style="left:125px;top:293px" width="19" height="21" viewBox="0.0000 0.0000 19.0000 21.0000" preserveAspectRatio="none"><rect x="0.8" y="0.7" width="16.4" height="18.6" rx="2" fill="#fff" stroke="#cbcbcb" stroke-width="1.1"/><rect x="2.9" y="2.7" width="7.4" height="2" fill="#4fa9e8"/><rect x="2.9" y="6.2" width="12.1" height="1" fill="#cfcfcf"/><rect x="2.9" y="9.1" width="12.1" height="1" fill="#cfcfcf"/><rect x="2.9" y="12.6" width="7.4" height="2" fill="#4fa9e8"/><rect x="2.9" y="16.4" width="12.1" height="1" fill="#cfcfcf"/></svg>
<span class="t" style="left:151.20px;top:477.00px;font-size:15.26px;color:#5b94c8;transform:scaleX(1.0054);margin-top:-180px;">Amount Paid</span>
<svg class="i" style="left:485px;top:317px" width="5" height="5" viewBox="-0.4000 -0.4000 5.0000 5.0000" preserveAspectRatio="none"><path d="M4 0 V4 H0Z" fill="#c9c9c9"/></svg>
<svg class="i" style="left:498px;top:297px" width="14" height="15" viewBox="-0.6000 -0.9000 14.0000 15.0000" preserveAspectRatio="none"><rect x="0" y="0" width="5" height="14" rx="1.6" fill="#6cbdee"/><rect x="1.6" y="0" width="2.4" height="14" fill="#b2dbf4"/><rect x="3.7" y="0" width="9.3" height="14" fill="#2f86d2"/><text x="8.5" y="9.1" font-family="Liberation Sans, sans-serif" font-weight="700" font-size="8.6" fill="#fff" text-anchor="middle">A</text></svg>
<span class="t" style="left:515.40px;top:477.00px;font-size:15.26px;color:#5b94c8;transform:scaleX(0.9469);margin-top:-180px;">Finance › Terminology</span>
<span class="t" style="left:680.40px;top:476.00px;font-size:15.26px;color:#333;letter-spacing:0.55px;transform:scaleX(0.9470);margin-top:-180px;">Amount Paid to Date on the Vendor Invoice</span>
<div class="b" style="left:0;top:358px;width:933px;height:1px;background:#e6e6e6"></div>
<svg class="i" style="left:10px;top:328px" width="15" height="20" viewBox="-0.1000 -0.8000 15.0000 20.0000" preserveAspectRatio="none"><path d="M3.0 11.6 L0.5 16.6 L2.9 16.2 L4.1 17.9 L6.4 13.6 M8.2 13.6 L10.5 17.9 L11.7 16.2 L14.1 16.6 L11.6 11.6" fill="none" stroke="#d6e8f6" stroke-width="0.9" stroke-linejoin="round"/><path d="M7.30 0.80 L8.70 1.68 L10.35 1.62 L11.12 3.08 L12.58 3.85 L12.52 5.50 L13.40 6.90 L12.52 8.30 L12.58 9.95 L11.12 10.72 L10.35 12.18 L8.70 12.12 L7.30 13.00 L5.90 12.12 L4.25 12.18 L3.48 10.72 L2.02 9.95 L2.08 8.30 L1.20 6.90 L2.08 5.50 L2.02 3.85 L3.48 3.08 L4.25 1.62 L5.90 1.68Z" fill="none" stroke="#d6e8f6" stroke-width="0.9" stroke-linejoin="round"/><circle cx="7.3" cy="6.9" r="3.4" fill="none" stroke="#d6e8f6" stroke-width="0.9"/></svg>
<svg class="i" style="left:35px;top:329px" width="17" height="19" viewBox="0.0000 0.0000 24.2857 25.0000" preserveAspectRatio="none"><path d="M9 21h9c.83 0 1.54-.5 1.84-1.22l3.02-7.05c.09-.23.14-.47.14-.73v-2c0-1.1-.9-2-2-2h-6.31l.95-4.57.03-.32c0-.41-.17-.79-.44-1.06L14.17 1 7.58 7.59C7.22 7.95 7 8.45 7 9v10c0 1.1.9 2 2 2zM9 9l4.34-4.34L12 10h9v2l-3 7H9V9zM1 9h4v12H1z" fill="#92c2e6"/></svg>
<svg class="i" style="left:61px;top:329px" width="18" height="18" viewBox="-0.6761 -0.6761 25.3521 25.3521" preserveAspectRatio="none"><path d="M11 15h2v2h-2zm0-8h2v6h-2zm.99-5C6.47 2 2 6.48 2 12s4.47 10 9.99 10C17.52 22 22 17.52 22 12S17.52 2 11.99 2zM12 20c-4.42 0-8-3.58-8-8s3.58-8 8-8 8 3.58 8 8-3.58 8-8 8z" fill="#92c2e6"/></svg>
<svg class="i" style="left:87px;top:329px" width="19" height="18" viewBox="0.0000 0.0000 19.0000 18.0000" preserveAspectRatio="none"><path d="M2.2 2.3 H15.7 V13.3 H4.5 L2.2 15.5Z" fill="none" stroke="#92c2e6" stroke-width="1.2" stroke-linejoin="round"/><path d="M4.6 5.2 H13.4 M4.6 7.45 H13.4 M4.6 9.7 H10" fill="none" stroke="#92c2e6" stroke-width="0.95"/></svg>
<div class="b" style="left:46.2px;top:326.6px;width:11.6px;height:11.6px;border-radius:50%;background:#5aaee0"></div>
<span class="t" style="left:49.40px;top:509.00px;font-size:9px;color:#fff;font-weight:700;transform:scaleX(0.9000);margin-top:-180px;">1</span>
<div class="b" style="left:72.4px;top:326.6px;width:11.6px;height:11.6px;border-radius:50%;background:#5aaee0"></div>
<span class="t" style="left:75.60px;top:509.00px;font-size:9px;color:#fff;font-weight:700;transform:scaleX(0.9000);margin-top:-180px;">1</span>
<div class="b" style="left:99.2px;top:326.6px;width:11.6px;height:11.6px;border-radius:50%;background:#5aaee0"></div>
<span class="t" style="left:102.40px;top:509.00px;font-size:9px;color:#fff;font-weight:700;transform:scaleX(0.9000);margin-top:-180px;">1</span>
<svg class="i" style="left:125px;top:329px" width="19" height="21" viewBox="0.0000 0.0000 19.0000 21.0000" preserveAspectRatio="none"><rect x="0.8" y="0.7" width="16.4" height="18.6" rx="2" fill="#fff" stroke="#cbcbcb" stroke-width="1.1"/><rect x="2.9" y="2.7" width="7.4" height="2" fill="#4fa9e8"/><rect x="2.9" y="6.2" width="12.1" height="1" fill="#cfcfcf"/><rect x="2.9" y="9.1" width="12.1" height="1" fill="#cfcfcf"/><rect x="2.9" y="12.6" width="7.4" height="2" fill="#4fa9e8"/><rect x="2.9" y="16.4" width="12.1" height="1" fill="#cfcfcf"/></svg>
<span class="t" style="left:151.20px;top:513.00px;font-size:15.26px;color:#5b94c8;transform:scaleX(1.0262);margin-top:-180px;">Billing Street Address 2</span>
<svg class="i" style="left:485px;top:353px" width="5" height="5" viewBox="-0.4000 -0.4000 5.0000 5.0000" preserveAspectRatio="none"><path d="M4 0 V4 H0Z" fill="#c9c9c9"/></svg>
<svg class="i" style="left:498px;top:333px" width="14" height="15" viewBox="-0.6000 -0.9000 14.0000 15.0000" preserveAspectRatio="none"><rect x="0" y="0" width="5" height="14" rx="1.6" fill="#6cbdee"/><rect x="1.6" y="0" width="2.4" height="14" fill="#b2dbf4"/><rect x="3.7" y="0" width="9.3" height="14" fill="#2f86d2"/><text x="8.5" y="9.1" font-family="Liberation Sans, sans-serif" font-weight="700" font-size="8.6" fill="#fff" text-anchor="middle">A</text></svg>
<span class="t" style="left:515.40px;top:513.00px;font-size:15.26px;color:#5b94c8;transform:scaleX(0.9469);margin-top:-180px;">Finance › Terminology</span>
<span class="t" style="left:680.40px;top:512.00px;font-size:15.26px;color:#333;letter-spacing:0.55px;transform:scaleX(0.9293);margin-top:-180px;">Second line of street address, if needed</span>
<div class="b" style="left:0;top:394px;width:933px;height:1px;background:#e6e6e6"></div>
<svg class="i" style="left:10px;top:364px" width="15" height="20" viewBox="-0.1000 -0.8000 15.0000 20.0000" preserveAspectRatio="none"><path d="M3.0 11.6 L0.5 16.6 L2.9 16.2 L4.1 17.9 L6.4 13.6 M8.2 13.6 L10.5 17.9 L11.7 16.2 L14.1 16.6 L11.6 11.6" fill="none" stroke="#d6e8f6" stroke-width="0.9" stroke-linejoin="round"/><path d="M7.30 0.80 L8.70 1.68 L10.35 1.62 L11.12 3.08 L12.58 3.85 L12.52 5.50 L13.40 6.90 L12.52 8.30 L12.58 9.95 L11.12 10.72 L10.35 12.18 L8.70 12.12 L7.30 13.00 L5.90 12.12 L4.25 12.18 L3.48 10.72 L2.02 9.95 L2.08 8.30 L1.20 6.90 L2.08 5.50 L2.02 3.85 L3.48 3.08 L4.25 1.62 L5.90 1.68Z" fill="none" stroke="#d6e8f6" stroke-width="0.9" stroke-linejoin="round"/><circle cx="7.3" cy="6.9" r="3.4" fill="none" stroke="#d6e8f6" stroke-width="0.9"/></svg>
<svg class="i" style="left:35px;top:365px" width="17" height="19" viewBox="0.0000 0.0000 24.2857 25.0000" preserveAspectRatio="none"><path d="M9 21h9c.83 0 1.54-.5 1.84-1.22l3.02-7.05c.09-.23.14-.47.14-.73v-2c0-1.1-.9-2-2-2h-6.31l.95-4.57.03-.32c0-.41-.17-.79-.44-1.06L14.17 1 7.58 7.59C7.22 7.95 7 8.45 7 9v10c0 1.1.9 2 2 2zM9 9l4.34-4.34L12 10h9v2l-3 7H9V9zM1 9h4v12H1z" fill="#d6e8f6"/></svg>
<svg class="i" style="left:61px;top:365px" width="18" height="18" viewBox="-0.6761 -0.6761 25.3521 25.3521" preserveAspectRatio="none"><path d="M11 15h2v2h-2zm0-8h2v6h-2zm.99-5C6.47 2 2 6.48 2 12s4.47 10 9.99 10C17.52 22 22 17.52 22 12S17.52 2 11.99 2zM12 20c-4.42 0-8-3.58-8-8s3.58-8 8-8 8 3.58 8 8-3.58 8-8 8z" fill="#d6e8f6"/></svg>
<svg class="i" style="left:87px;top:365px" width="19" height="18" viewBox="0.0000 0.0000 19.0000 18.0000" preserveAspectRatio="none"><path d="M2.2 2.3 H15.7 V13.3 H4.5 L2.2 15.5Z" fill="none" stroke="#d6e8f6" stroke-width="1.2" stroke-linejoin="round"/><path d="M4.6 5.2 H13.4 M4.6 7.45 H13.4 M4.6 9.7 H10" fill="none" stroke="#d6e8f6" stroke-width="0.95"/></svg>
<svg class="i" style="left:125px;top:365px" width="19" height="21" viewBox="0.0000 0.0000 19.0000 21.0000" preserveAspectRatio="none"><rect x="0.8" y="0.7" width="16.4" height="18.6" rx="2" fill="#fff" stroke="#cbcbcb" stroke-width="1.1"/><rect x="2.9" y="2.7" width="7.4" height="2" fill="#4fa9e8"/><rect x="2.9" y="6.2" width="12.1" height="1" fill="#cfcfcf"/><rect x="2.9" y="9.1" width="12.1" height="1" fill="#cfcfcf"/><rect x="2.9" y="12.6" width="7.4" height="2" fill="#4fa9e8"/><rect x="2.9" y="16.4" width="12.1" height="1" fill="#cfcfcf"/></svg>
<span class="t" style="left:151.20px;top:549.00px;font-size:15.26px;color:#5b94c8;transform:scaleX(1.0252);margin-top:-180px;">Billing Street Address2</span>
<svg class="i" style="left:485px;top:389px" width="5" height="5" viewBox="-0.4000 -0.4000 5.0000 5.0000" preserveAspectRatio="none"><path d="M4 0 V4 H0Z" fill="#c9c9c9"/></svg>
<svg class="i" style="left:498px;top:369px" width="14" height="15" viewBox="-0.6000 -0.9000 14.0000 15.0000" preserveAspectRatio="none"><rect x="0" y="0" width="5" height="14" rx="1.6" fill="#6cbdee"/><rect x="1.6" y="0" width="2.4" height="14" fill="#b2dbf4"/><rect x="3.7" y="0" width="9.3" height="14" fill="#2f86d2"/><text x="8.5" y="9.1" font-family="Liberation Sans, sans-serif" font-weight="700" font-size="8.6" fill="#fff" text-anchor="middle">A</text></svg>
<span class="t" style="left:515.40px;top:549.00px;font-size:15.26px;color:#5b94c8;transform:scaleX(0.9469);margin-top:-180px;">Finance › Terminology</span>
<span class="t" style="left:680.40px;top:548.00px;font-size:15.26px;color:#333;letter-spacing:0.55px;transform:scaleX(0.9293);margin-top:-180px;">Second line of street address, if needed</span>
<div class="b" style="left:0;top:430px;width:933px;height:1px;background:#e6e6e6"></div>
<svg class="i" style="left:10px;top:400px" width="15" height="20" viewBox="-0.1000 -0.8000 15.0000 20.0000" preserveAspectRatio="none"><path d="M3.0 11.6 L0.5 16.6 L2.9 16.2 L4.1 17.9 L6.4 13.6 M8.2 13.6 L10.5 17.9 L11.7 16.2 L14.1 16.6 L11.6 11.6" fill="none" stroke="#d6e8f6" stroke-width="0.9" stroke-linejoin="round"/><path d="M7.30 0.80 L8.70 1.68 L10.35 1.62 L11.12 3.08 L12.58 3.85 L12.52 5.50 L13.40 6.90 L12.52 8.30 L12.58 9.95 L11.12 10.72 L10.35 12.18 L8.70 12.12 L7.30 13.00 L5.90 12.12 L4.25 12.18 L3.48 10.72 L2.02 9.95 L2.08 8.30 L1.20 6.90 L2.08 5.50 L2.02 3.85 L3.48 3.08 L4.25 1.62 L5.90 1.68Z" fill="none" stroke="#d6e8f6" stroke-width="0.9" stroke-linejoin="round"/><circle cx="7.3" cy="6.9" r="3.4" fill="none" stroke="#d6e8f6" stroke-width="0.9"/></svg>
<svg class="i" style="left:35px;top:401px" width="17" height="19" viewBox="0.0000 0.0000 24.2857 25.0000" preserveAspectRatio="none"><path d="M9 21h9c.83 0 1.54-.5 1.84-1.22l3.02-7.05c.09-.23.14-.47.14-.73v-2c0-1.1-.9-2-2-2h-6.31l.95-4.57.03-.32c0-.41-.17-.79-.44-1.06L14.17 1 7.58 7.59C7.22 7.95 7 8.45 7 9v10c0 1.1.9 2 2 2zM9 9l4.34-4.34L12 10h9v2l-3 7H9V9zM1 9h4v12H1z" fill="#d6e8f6"/></svg>
<svg class="i" style="left:61px;top:401px" width="18" height="18" viewBox="-0.6761 -0.6761 25.3521 25.3521" preserveAspectRatio="none"><path d="M11 15h2v2h-2zm0-8h2v6h-2zm.99-5C6.47 2 2 6.48 2 12s4.47 10 9.99 10C17.52 22 22 17.52 22 12S17.52 2 11.99 2zM12 20c-4.42 0-8-3.58-8-8s3.58-8 8-8 8 3.58 8 8-3.58 8-8 8z" fill="#d6e8f6"/></svg>
<svg class="i" style="left:87px;top:401px" width="19" height="18" viewBox="0.0000 0.0000 19.0000 18.0000" preserveAspectRatio="none"><path d="M2.2 2.3 H15.7 V13.3 H4.5 L2.2 15.5Z" fill="none" stroke="#d6e8f6" stroke-width="1.2" stroke-linejoin="round"/><path d="M4.6 5.2 H13.4 M4.6 7.45 H13.4 M4.6 9.7 H10" fill="none" stroke="#d6e8f6" stroke-width="0.95"/></svg>
<svg class="i" style="left:125px;top:401px" width="19" height="21" viewBox="0.0000 0.0000 19.0000 21.0000" preserveAspectRatio="none"><rect x="0.8" y="0.7" width="16.4" height="18.6" rx="2" fill="#fff" stroke="#cbcbcb" stroke-width="1.1"/><rect x="2.9" y="2.7" width="7.4" height="2" fill="#4fa9e8"/><rect x="2.9" y="6.2" width="12.1" height="1" fill="#cfcfcf"/><rect x="2.9" y="9.1" width="12.1" height="1" fill="#cfcfcf"/><rect x="2.9" y="12.6" width="7.4" height="2" fill="#4fa9e8"/><rect x="2.9" y="16.4" width="12.1" height="1" fill="#cfcfcf"/></svg>
<span class="t" style="left:151.20px;top:585.00px;font-size:15.26px;color:#5b94c8;transform:scaleX(1.0265);margin-top:-180px;">Billing Street Address</span>
<svg class="i" style="left:485px;top:425px" width="5" height="5" viewBox="-0.4000 -0.4000 5.0000 5.0000" preserveAspectRatio="none"><path d="M4 0 V4 H0Z" fill="#c9c9c9"/></svg>
<svg class="i" style="left:498px;top:405px" width="14" height="15" viewBox="-0.6000 -0.9000 14.0000 15.0000" preserveAspectRatio="none"><rect x="0" y="0" width="5" height="14" rx="1.6" fill="#6cbdee"/><rect x="1.6" y="0" width="2.4" height="14" fill="#b2dbf4"/><rect x="3.7" y="0" width="9.3" height="14" fill="#2f86d2"/><text x="8.5" y="9.1" font-family="Liberation Sans, sans-serif" font-weight="700" font-size="8.6" fill="#fff" text-anchor="middle">A</text></svg>
<span class="t" style="left:515.40px;top:585.00px;font-size:15.26px;color:#5b94c8;transform:scaleX(0.9469);margin-top:-180px;">Finance › Terminology</span>
<span class="t" style="left:680.40px;top:584.00px;font-size:15.26px;color:#333;letter-spacing:0.55px;transform:scaleX(1.0029);margin-top:-180px;">First line of street address</span>
<div class="b" style="left:115px;top:0;width:1px;height:403px;background:#e4e4e4"></div>
<div class="b" style="left:490px;top:0;width:1px;height:403px;background:#e4e4e4"></div>
<div class="b" style="left:671px;top:0;width:1px;height:403px;background:#e4e4e4"></div>
</div>
<div class="b" style="left:933px;top:180px;width:21px;height:403px;background:#f1f1f1"></div>
<div class="b" style="left:935px;top:200px;width:17px;height:84px;background:#c1c1c1"></div>
<svg class="i" style="left:939px;top:187px" width="11" height="8" viewBox="0.0000 0.0000 11.0000 8.0000" preserveAspectRatio="none"><path d="M0 6.2 L4.7 0.8 L9.4 6.2Z" fill="#a3a3a3"/></svg>
<svg class="i" style="left:938px;top:568px" width="11" height="8" viewBox="-0.5000 -0.5000 11.0000 8.0000" preserveAspectRatio="none"><path d="M0 0.5 L9.6 0.5 L4.8 5.6Z" fill="#505050"/></svg>
<div class="b" style="left:0;top:583px;width:933px;height:17px;background:#f1f1f1"></div>
<div class="b" style="left:933px;top:583px;width:21px;height:17px;background:#dcdcdc"></div>
<div class="b" style="left:22px;top:585px;width:703px;height:15px;background:#c1c1c1"></div>
<svg class="i" style="left:9px;top:588px" width="7" height="11" viewBox="0.0000 -0.5000 7.0000 11.0000" preserveAspectRatio="none"><path d="M5 0.4 L0.2 4.9 L5 9.4Z" fill="#a3a3a3"/></svg>
<svg class="i" style="left:920px;top:588px" width="7" height="11" viewBox="0.0000 -0.5000 7.0000 11.0000" preserveAspectRatio="none"><path d="M0.2 0.4 L5.2 4.9 L0.2 9.4Z" fill="#505050"/></svg>
<div class="b" style="left:954px;top:104px;width:5px;height:496px;background:#dddddd"></div>
<div class="b" style="left:954px;top:324px;width:5px;height:60px;background:#b9b9b9"></div>
<svg class="i" style="left:954px;top:348px" width="6" height="12" viewBox="0.0000 0.0000 6.0000 12.0000" preserveAspectRatio="none"><path d="M0 0 L5 5.5 L0 11Z" fill="#9a9a9a"/></svg>
<div class="b" style="left:959px;top:104px;width:438px;height:37px;background:#f9f9f9"></div>
<div class="b" style="left:959px;top:141px;width:438px;height:1px;background:#e4e4e4"></div>
<span class="t" style="left:970.80px;top:114.00px;font-size:18.3px;color:#3a87c8;font-weight:700;transform:scaleX(0.9207);">Details</span>
<svg class="i" style="left:1147px;top:219px" width="62" height="63" viewBox="0.0000 0.0000 62.0000 63.0000" preserveAspectRatio="none"><rect x="1" y="1" width="29.7" height="8.7" fill="#d9d9d9"/><rect x="1" y="35.1" width="29.7" height="8.7" fill="#d9d9d9"/><rect x="1" y="52.2" width="29.7" height="8.5" fill="#d9d9d9"/><rect x="36.7" y="3" width="21.1" height="55.7" fill="#b5d9f3" stroke="#3a8fd4" stroke-width="4"/><path d="M34.7 12 L49.3 22.4 L34.7 32.2Z" fill="#fff"/><rect x="1" y="18" width="30" height="8.9" fill="#3a8fd4"/><path d="M30 13.9 L43.3 22.4 L30 30.9Z" fill="#3a8fd4"/></svg>
<span class="t" style="left:1064.80px;top:298.00px;font-size:21.4px;color:#aaaaaa;font-weight:700;transform:scaleX(0.9535);">No details are available</span>
<span class="t" style="left:1023.40px;top:331.00px;font-size:18.3px;color:#b7b7b7;letter-spacing:0.4px;transform:scaleX(1.0054);">Try selecting an object in the results</span>
<div class="b" style="left:0;top:0;width:1px;height:595px;background:#a9a9a9"></div>
<div class="b" style="left:6px;top:600px;width:1391px;height:1px;background:#9c9c9c"></div>
<div class="b" style="left:0;top:594px;width:7px;height:7px;background:#ececec"></div>
<div class="b" style="left:0;top:588px;width:12px;height:13px;box-sizing:border-box;border-left:1px solid #a9a9a9;border-bottom:1px solid #9c9c9c;border-bottom-left-radius:6px;background:#f1f1f1"></div>
<svg class="i" style="left:9px;top:588px" width="7" height="11" viewBox="0.0000 -0.5000 7.0000 11.0000" preserveAspectRatio="none"><path d="M5 0.4 L0.2 4.9 L5 9.4Z" fill="#a3a3a3"/></svg>
<div class="b" style="left:1395px;top:0;width:1px;height:601px;background:#e2e2e2"></div>
<div class="b" style="left:1396px;top:0;width:1px;height:601px;background:#a6a6a6"></div>
</body></html>
